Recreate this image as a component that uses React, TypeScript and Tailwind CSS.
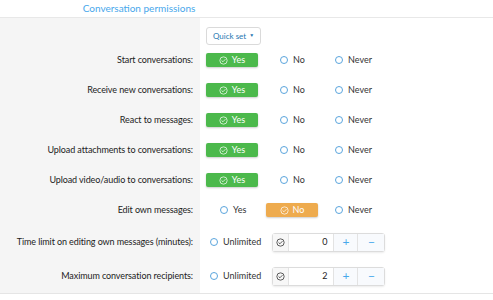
import React from "react";

const font = { fontFamily: "Lato, 'Noto Sans', sans-serif" };

function CheckCircle({ className = "" }: { className?: string }) {
  return (
    <svg viewBox="0 0 16 16" className={className} fill="none" stroke="currentColor" strokeWidth="1.4">
      <circle cx="8" cy="8" r="6.5" />
      <path d="M5 8.3l2 2 4-4.2" strokeLinecap="round" strokeLinejoin="round" />
    </svg>
  );
}

function Radio({ label }: { label: string }) {
  return (
    <span className="flex items-center gap-[5px] text-[9px] text-[#333]">
      <span className="w-[8px] h-[8px] rounded-full border border-[#5aa5dd] bg-white" />
      {label}
    </span>
  );
}

function Selected({ label, tone }: { label: string; tone: "green" | "orange" }) {
  const bg = tone === "green" ? "bg-[#4cb94c]" : "bg-[#eeab4e]";
  return (
    <span
      className={`flex items-center justify-center gap-[4px] w-[52px] h-[14px] rounded-[2px] ${bg} text-white text-[9px] shadow-[0_1px_2px_rgba(0,0,0,0.2)]`}
    >
      <CheckCircle className="w-[9px] h-[9px] opacity-90" />
      {label}
    </span>
  );
}

const rows: { label: string; choice: "yes" | "no" }[] = [
  { label: "Start conversations:", choice: "yes" },
  { label: "Receive new conversations:", choice: "yes" },
  { label: "React to messages:", choice: "yes" },
  { label: "Upload attachments to conversations:", choice: "yes" },
  { label: "Upload video/audio to conversations:", choice: "yes" },
  { label: "Edit own messages:", choice: "no" },
];

function Label({ children }: { children: React.ReactNode }) {
  return (
    <div className="w-[200px] shrink-0 bg-[#f5f5f5] flex items-center justify-end pr-[7px] text-[9px] tracking-[-0.1px] whitespace-nowrap text-[#222]">
      {children}
    </div>
  );
}

function NumberRow({ label, value }: { label: string; value: number }) {
  return (
    <div className="flex h-[34px]">
      <Label>{label}</Label>
      <div className="flex-1 flex items-center pl-[10px] gap-[11px]">
        <Radio label="Unlimited" />
        <div className="flex h-[19px] w-[113px] border border-[#dcdcdc] rounded-[3px] shadow-[0_1px_2px_rgba(0,0,0,0.08)] bg-white text-[9px]">
          <span className="w-[16px] flex items-center justify-center bg-[#f7f7f7] border-r border-[#e3e3e3] text-[#333]">
            <CheckCircle className="w-[9px] h-[9px]" />
          </span>
          <span className="flex-1 flex items-center justify-end pr-[6px] text-[#222]">{value}</span>
          <span className="w-[24px] flex items-center justify-center border-l border-[#e3e3e3] bg-[#f8fafd] text-[#47a7eb] text-[12px]">+</span>
          <span className="w-[27px] flex items-center justify-center border-l border-[#e3e3e3] bg-[#f8fafd] text-[#47a7eb] text-[12px]">−</span>
        </div>
      </div>
    </div>
  );
}

export default function App() {
  return (
    <div className="w-[493px] h-[300px] bg-white overflow-hidden" style={font}>
      <div className="h-[18px] border-b border-[#e8e8e8] flex items-center">
        <span className="w-[278px] text-center text-[10px] text-[#47a7eb]">Conversation permissions</span>
      </div>
      <div className="border-b border-[#e5e5e5]">
        <div className="flex h-[27px]">
          <Label>{""}</Label>
          <div className="flex-1 flex items-end pl-[6px]">
            <span className="flex items-center gap-[3px] h-[18px] px-[6px] border border-[#dadada] rounded-[3px] text-[8px] text-[#2577b1] bg-white">
              Quick set
              <span className="text-[5px] text-[#2577b1]">▼</span>
            </span>
          </div>
        </div>
        {rows.map((r) => (
          <div key={r.label} className="flex h-[30px]">
            <Label>{r.label}</Label>
            <div className="flex-1 flex items-center">
              {r.choice === "yes" ? (
                <>
                  <span className="pl-[6px] w-[80px]">
                    <Selected label="Yes" tone="green" />
                  </span>
                  <span className="w-[55px]">
                    <Radio label="No" />
                  </span>
                  <Radio label="Never" />
                </>
              ) : (
                <>
                  <span className="pl-[20px] w-[66px]">
                    <Radio label="Yes" />
                  </span>
                  <span className="w-[69px]">
                    <Selected label="No" tone="orange" />
                  </span>
                  <Radio label="Never" />
                </>
              )}
            </div>
          </div>
        ))}
        <NumberRow label="Time limit on editing own messages (minutes):" value={0} />
        <NumberRow label="Maximum conversation recipients:" value={2} />
      </div>
    </div>
  );
}
